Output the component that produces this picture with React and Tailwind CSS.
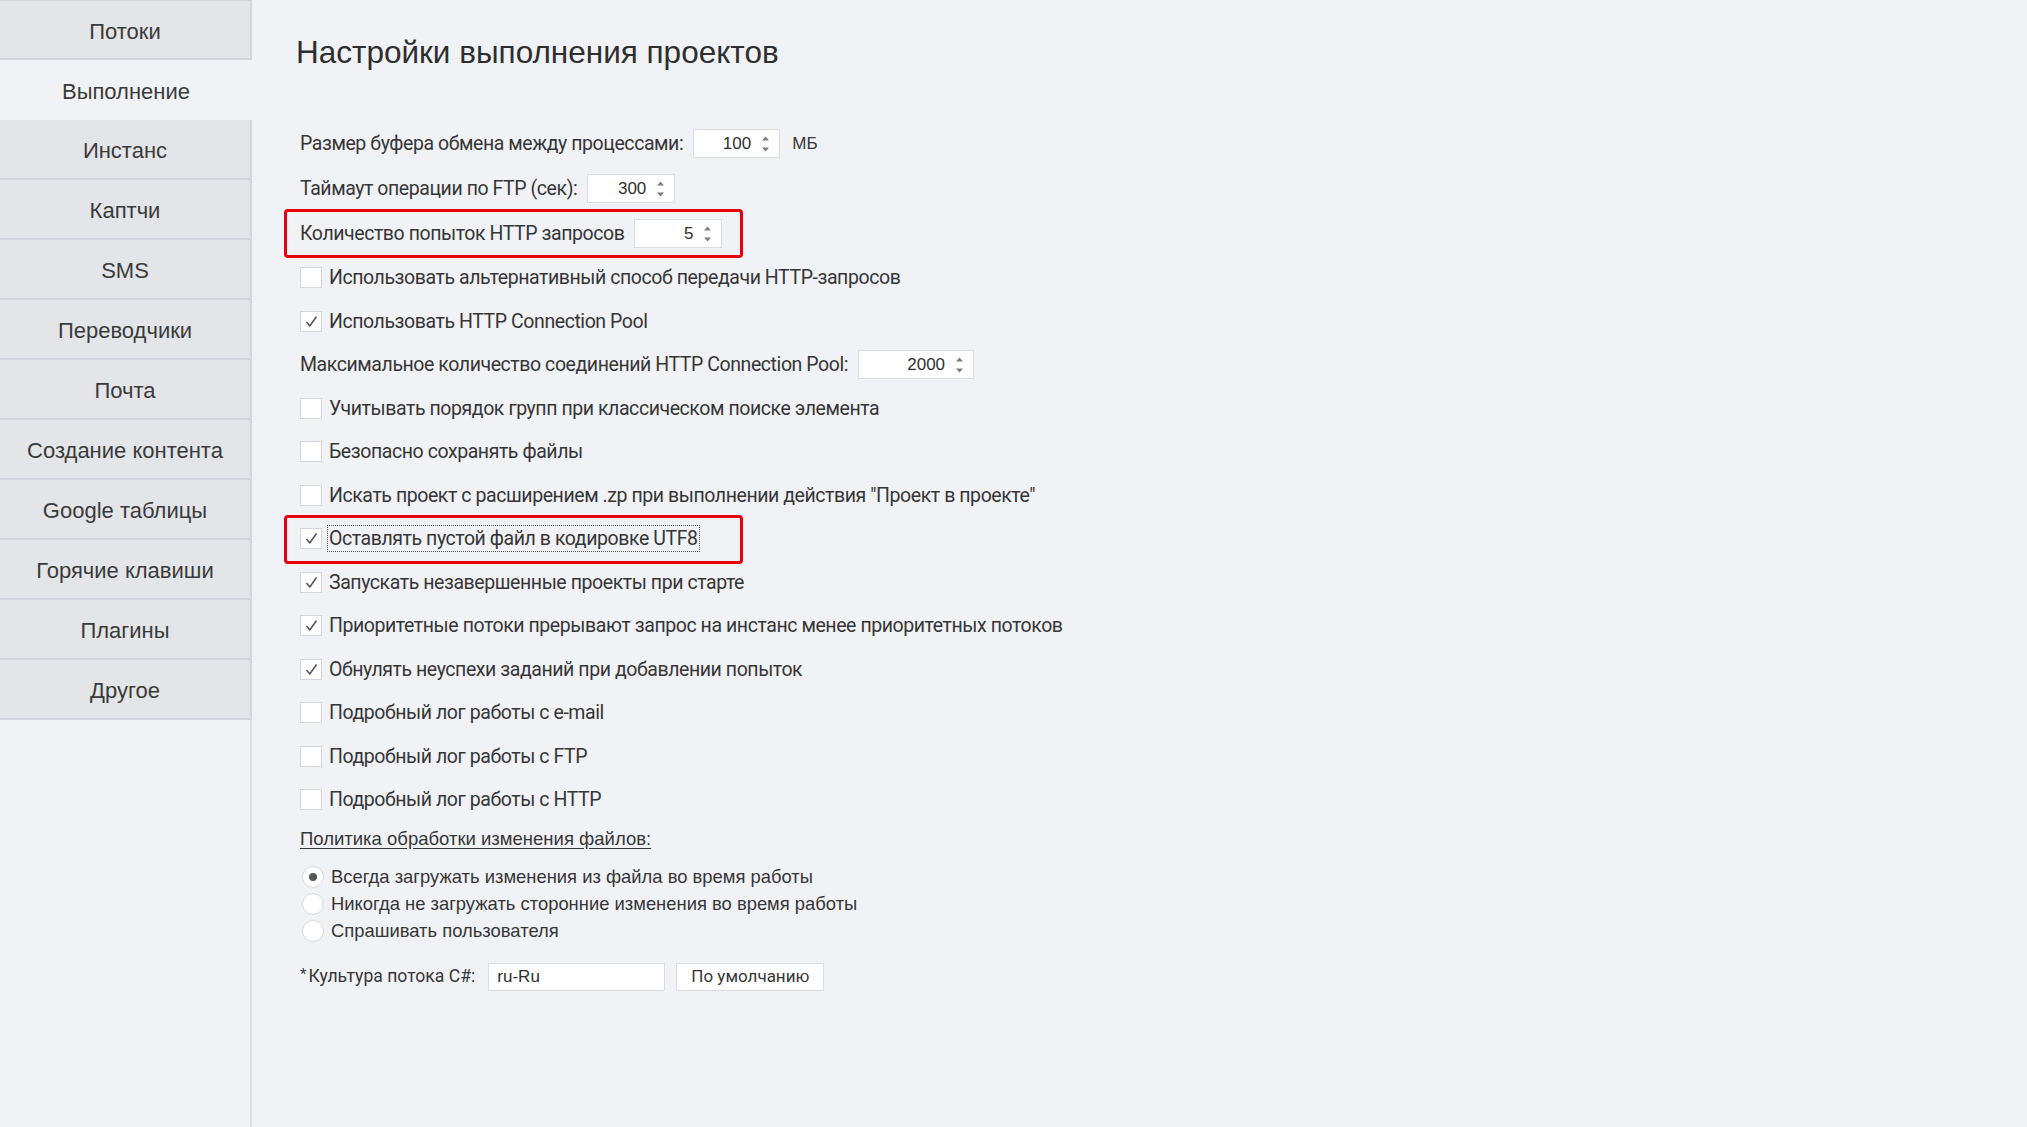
import React from "react";

const NARROW = "[font-family:Roboto,'DejaVu_Sans_Condensed',sans-serif]";
const SANS = "[font-family:'Liberation_Sans',Arial,sans-serif]";

const menu = [
  "Потоки",
  "Выполнение",
  "Инстанс",
  "Каптчи",
  "SMS",
  "Переводчики",
  "Почта",
  "Создание контента",
  "Google таблицы",
  "Горячие клавиши",
  "Плагины",
  "Другое",
];

const rows = [
  { kind: "num", label: "Размер буфера обмена между процессами:", value: "100", w: "w-[87px]", suffix: "МБ" },
  { kind: "num", label: "Таймаут операции по FTP (сек):", value: "300", w: "w-[88px]" },
  { kind: "num", label: "Количество попыток HTTP запросов", value: "5", w: "w-[88px]", mark: true },
  { kind: "check", label: "Использовать альтернативный способ передачи HTTP-запросов" },
  { kind: "check", label: "Использовать HTTP Connection Pool", checked: true },
  { kind: "num", label: "Максимальное количество соединений HTTP Connection Pool:", value: "2000", w: "w-[116px]" },
  { kind: "check", label: "Учитывать порядок групп при классическом поиске элемента" },
  { kind: "check", label: "Безопасно сохранять файлы" },
  { kind: "check", label: "Искать проект с расширением .zp при выполнении действия \"Проект в проекте\"" },
  { kind: "check", label: "Оставлять пустой файл в кодировке UTF8", checked: true, mark: true, focus: true },
  { kind: "check", label: "Запускать незавершенные проекты при старте", checked: true },
  { kind: "check", label: "Приоритетные потоки прерывают запрос на инстанс менее приоритетных потоков", checked: true },
  { kind: "check", label: "Обнулять неуспехи заданий при добавлении попыток", checked: true },
  { kind: "check", label: "Подробный лог работы с e-mail" },
  { kind: "check", label: "Подробный лог работы с FTP" },
  { kind: "check", label: "Подробный лог работы с HTTP" },
];

function Spinner() {
  return (
    <svg width="9" height="18" viewBox="0 0 9 18" className="shrink-0">
      <path d="M1 5.5 L4.5 1.5 L8 5.5 Z" fill="#7a7d82" />
      <path d="M1 12.5 L4.5 16.5 L8 12.5 Z" fill="#7a7d82" />
    </svg>
  );
}

function NumInput({ value, w }) {
  return (
    <div className={`${w} flex h-[29px] items-center justify-end gap-[10px] border border-[#d9dce1] bg-white pr-[9px]`}>
      <span className={`${SANS} text-[17px] leading-none text-[#2f2f2f]`}>{value}</span>
      <Spinner />
    </div>
  );
}

function Checkbox({ checked }) {
  return (
    <div className="flex h-[21px] w-[22px] shrink-0 items-center justify-center border border-[#d3d6dc] bg-white">
      {checked && (
        <svg width="15" height="15" viewBox="0 0 15 15">
          <path d="M2.5 8 L5.8 12 L12.5 2.5" fill="none" stroke="#4b4d52" strokeWidth="1.4" strokeLinejoin="round" />
        </svg>
      )}
    </div>
  );
}

function Radio({ checked }) {
  return (
    <div className="flex h-[22px] w-[22px] shrink-0 items-center justify-center rounded-full border border-[#d6d9de] bg-white">
      {checked && <div className="h-[8px] w-[8px] rounded-full bg-[#55575c]" />}
    </div>
  );
}

function Row({ row, tall }) {
  return (
    <div className={`relative flex items-center ${tall ? "h-[45px]" : "h-[43.5px]"}`}>
      {row.mark && (
        <div className="pointer-events-none absolute left-[-16px] top-[-2px] h-[49px] w-[459px] rounded-[4px] border-[3px] border-[#e5000d]" />
      )}
      {row.kind === "num" ? (
        <>
          <span className={`${NARROW} text-[19.5px] leading-none tracking-[-0.43px] text-[#363636]`}>{row.label}</span>
          <div className="ml-[10px]">
            <NumInput value={row.value} w={row.w} />
          </div>
          {row.suffix && (
            <span className={`${SANS} ml-[12px] text-[17px] text-[#363636]`}>{row.suffix}</span>
          )}
        </>
      ) : (
        <>
          <Checkbox checked={row.checked} />
          <span
            className={`${NARROW} ml-[5px] px-[1px] text-[19.5px] leading-[25px] tracking-[-0.43px] text-[#363636] ${
              row.focus ? "border border-dotted border-[#555]" : "border border-transparent"
            }`}
          >
            {row.label}
          </span>
        </>
      )}
    </div>
  );
}

export default function App() {
  return (
    <div className="flex min-h-[1127px] w-[2027px] bg-[#f1f2f6]">
      <aside className="flex w-[252px] shrink-0 flex-col">
        {menu.map((item, i) => (
          <div
            key={item}
            className={`flex h-[60px] items-center justify-center pt-[3px] ${SANS} text-[22px] text-[#3a3a3a] ${
              i === 1
                ? "bg-[#f1f2f6]"
                : "border-b-2 border-r-2 border-[#d2d6dc] bg-[#e3e5e9]"
            } ${i === 0 ? "border-t" : ""}`}
          >
            {item}
          </div>
        ))}
        <div className="flex-1 border-r-2 border-[#dcdfe4]" />
      </aside>

      <main className="flex-1 pl-[48px] pt-[32px]">
        <h1 className={`${SANS} -ml-[4px] h-[40px] text-[31.5px] leading-[40px] text-[#2e2e2e]`}>
          Настройки выполнения проектов
        </h1>

        <div className="mt-[49px] flex flex-col">
          {rows.map((row, i) => (
            <Row key={row.label} row={row} tall={i < 3} />
          ))}
        </div>

        <div className={`${SANS} mt-[2px] flex h-[30px] items-center text-[18.5px] text-[#363636] underline underline-offset-[3px]`}>
          Политика обработки изменения файлов:
        </div>

        <div className="mt-[10px] flex flex-col pl-[2px]">
          {[
            ["Всегда загружать изменения из файла во время работы", true],
            ["Никогда не загружать сторонние изменения во время работы", false],
            ["Спрашивать пользователя", false],
          ].map(([text, on]) => (
            <div key={text} className="flex h-[27px] items-center gap-[7px]">
              <Radio checked={on} />
              <span className={`${SANS} text-[18.4px] leading-none text-[#363636]`}>{text}</span>
            </div>
          ))}
        </div>

        <div className="mt-[18px] flex h-[28px] items-center">
          <span className={`${NARROW} text-[17.6px] leading-none text-[#363636]`}>
            <span className="relative top-[-3px] mr-[2px] text-[15px]">*</span>Культура потока C#:
          </span>
          <div className="ml-[13px] flex h-[28px] w-[177px] items-center border border-[#d9dce1] bg-white pl-[8px]">
            <span className={`${SANS} text-[17px] leading-none text-[#2f2f2f]`}>ru-Ru</span>
          </div>
          <button
            type="button"
            className={`${NARROW} ml-[11px] flex h-[28px] w-[148px] items-center justify-center border border-[#d9dce1] bg-white text-[17px] leading-none text-[#363636]`}
          >
            По умолчанию
          </button>
        </div>
      </main>
    </div>
  );
}
